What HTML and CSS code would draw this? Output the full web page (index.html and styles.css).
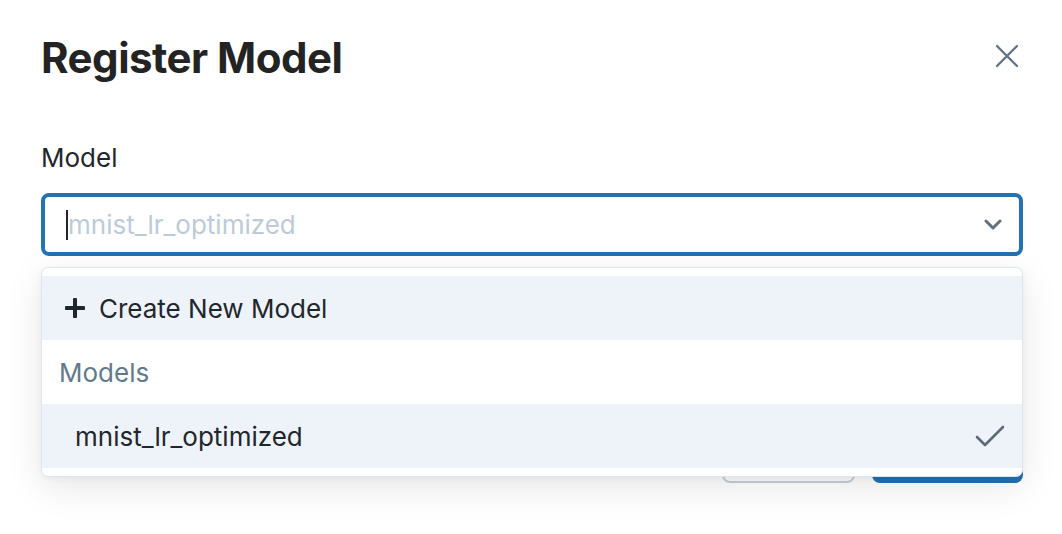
FILE: index.html
```html
<!DOCTYPE html>
<html lang="en">
<head>
<meta charset="utf-8">
<title>Register Model</title>
<link rel="stylesheet" href="styles.css">
</head>
<body>
<div class="modal">
  <header class="modal-header">
    <h1 class="title">Register Model</h1>
    <button class="close" aria-label="Close">
      <svg width="24" height="24" viewBox="0 0 24 24"><path d="M2 2 L22 22 M22 2 L2 22" stroke="#5d7384" stroke-width="2.3" stroke-linecap="round" fill="none"/></svg>
    </button>
  </header>
  <div class="field">
    <div class="label">Model</div>
    <div class="select-wrap">
      <div class="select">
        <span class="caret"></span>
        <span class="placeholder">mnist_lr_optimized</span>
        <svg class="chevron" width="18" height="12" viewBox="0 0 18 12"><path d="M2 2 L9 9 L16 2" stroke="#5f7181" stroke-width="3" stroke-linecap="round" stroke-linejoin="round" fill="none"/></svg>
      </div>
      <div class="dropdown">
        <div class="option option-create">
          <svg class="plus" width="20" height="20" viewBox="0 0 20 20"><path d="M10 1.5 V18.5 M1.5 10 H18.5" stroke="#1f272d" stroke-width="4" stroke-linecap="round" fill="none"/></svg>
          <span>Create New Model</span>
        </div>
        <div class="group-title">Models</div>
        <div class="option option-selected">
          <span>mnist_lr_optimized</span>
          <svg class="check" width="30" height="22" viewBox="0 0 30 22"><path d="M2 12 L10 20 L28 2" stroke="#5a6b79" stroke-width="2.6" stroke-linecap="round" stroke-linejoin="round" fill="none"/></svg>
        </div>
      </div>
    </div>
  </div>
  <footer class="footer">
    <button class="btn btn-secondary">Cancel</button>
    <button class="btn btn-primary">Register</button>
  </footer>
</div>
</body>
</html>
```

FILE: styles.css
```css
* { box-sizing: border-box; }

html, body {
  margin: 0;
  padding: 0;
  background: #ffffff;
}

body {
  font-family: Inter, "Liberation Sans", sans-serif;
  color: #1f272d;
}

.modal {
  width: 1062px;
  height: 534px;
  padding: 31px 39px 0 41px;
  overflow: hidden;
}

.modal-header {
  display: flex;
  justify-content: space-between;
  align-items: flex-start;
}

.title {
  margin: 0;
  padding-top: 1px;
  font-size: 42px;
  line-height: 52px;
  font-weight: 700;
  color: #232323;
  letter-spacing: -0.5px;
}

.close {
  margin: 13px 4px 0 0;
  padding: 0;
  border: 0;
  background: transparent;
  width: 24px;
  height: 24px;
  display: flex;
}

.field {
  margin-top: 58px;
}

.label {
  font-size: 26px;
  line-height: 32px;
  color: #1f272d;
}

.select-wrap {
  position: relative;
  margin-top: 19px;
}

.select {
  height: 63px;
  border: 4px solid #2272b4;
  border-radius: 8px;
  display: flex;
  align-items: center;
  padding: 0 17px 0 21px;
}

.caret {
  width: 2px;
  height: 30px;
  background: #1f272d;
}

.placeholder {
  flex: 1;
  font-size: 26px;
  color: #bccbd9;
}

.chevron {
  display: block;
}

.dropdown {
  position: absolute;
  left: 0;
  right: 0;
  top: calc(100% + 11px);
  background: #ffffff;
  border: 1px solid #dde6ec;
  border-radius: 7px;
  padding: 8px 0;
  box-shadow: 0 10px 36px rgba(0, 0, 0, 0.10), 0 2px 6px rgba(0, 0, 0, 0.04);
  z-index: 2;
}

.option {
  height: 64px;
  display: flex;
  align-items: center;
  font-size: 26px;
  color: #1f272d;
}

.option-create {
  background: #eef3fa;
  padding-left: 23px;
  gap: 14px;
}

.plus { display: block; }

.group-title {
  height: 64px;
  display: flex;
  align-items: center;
  padding-left: 17px;
  font-size: 26px;
  color: #5f7a8e;
}

.option-selected {
  background: #eef3fa;
  padding: 0 17px 0 33px;
  justify-content: space-between;
}

.check { display: block; }

.footer {
  margin-top: 163px;
  display: flex;
  justify-content: flex-end;
  gap: 17px;
}

.btn {
  height: 64px;
  border-radius: 8px;
  font-family: Inter, "Liberation Sans", sans-serif;
  font-size: 26px;
}

.btn-secondary {
  width: 133px;
  background: #ffffff;
  border: 2px solid #c5d1db;
  color: #1f272d;
}

.btn-primary {
  width: 151px;
  background: #2272b4;
  border: 0;
  color: #ffffff;
}
```
